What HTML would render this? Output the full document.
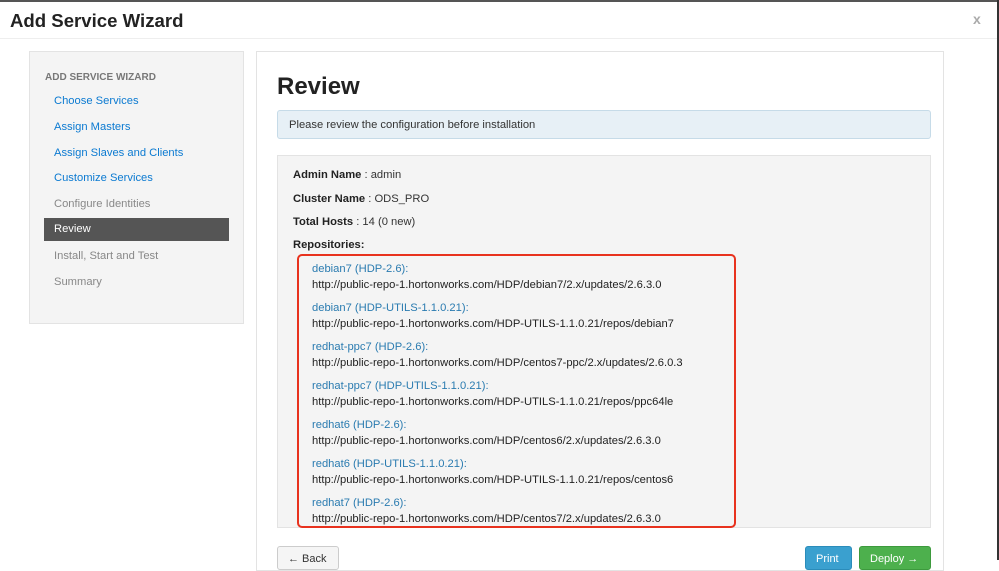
<!DOCTYPE html>
<html><head><style>
*{margin:0;padding:0;box-sizing:border-box}
body{width:999px;height:560px;overflow:hidden;background:#fff;font-family:"Liberation Sans",Arial,sans-serif;font-size:11.2px;color:#333;position:relative}
.top{position:absolute;left:0;top:0;width:999px;height:2px;background:#555}
.rstrip{position:absolute;right:0;top:0;width:2px;height:560px;background:#333}
h1{position:absolute;left:10px;top:10px;font-size:18.6px;font-weight:bold;color:#222}
.x{position:absolute;left:973px;top:11px;font-size:14px;color:#aaa;font-weight:bold}
.hr{position:absolute;left:0;top:38px;width:997px;height:1px;background:#eee}
.nav{position:absolute;left:29px;top:51px;width:215px;height:273px;background:#f4f4f4;border:1px solid #e3e3e3}
.nav .hd{position:absolute;left:15px;top:20px;font-size:10px;font-weight:bold;color:#777}
.nav .it{position:absolute;left:24px;font-size:11.2px;color:#0b7ad1}
.nav .g{color:#888}
.nav .act{position:absolute;left:14px;top:166px;width:185px;height:23px;background:#555;color:#fff;padding:5px 10px}
.main{position:absolute;left:256px;top:51px;width:688px;height:520px;border:1px solid #e3e3e3;background:#fff}
h2{position:absolute;left:277px;top:73px;font-size:24px;font-weight:bold;color:#222}
.alert{position:absolute;left:277px;top:110px;width:654px;height:29px;background:#e7f0f6;border:1px solid #c6dbe8;border-radius:3px;padding:8px 11px;font-size:11.2px}
.well{position:absolute;left:277px;top:155px;width:654px;height:373px;background:#f4f4f4;border:1px solid #e3e3e3}
.l{position:absolute;left:293px;font-size:11.2px}
.l b{color:#222}
.red{position:absolute;left:297px;top:254px;width:439px;height:274px;border:2px solid #e8321e;border-radius:5px}
.rl{position:absolute;left:312px;font-size:11.2px;color:#2a7bb0}
.ru{position:absolute;left:312px;font-size:11.2px;color:#222}
.btn{position:absolute;top:546px;height:24px;border-radius:3px;font-size:11px;padding:6px 10px}
</style></head><body>
<div class="top"></div><div class="rstrip"></div>
<h1>Add Service Wizard</h1><div class="x">x</div><div class="hr"></div>
<div class="nav">
<div class="hd">ADD SERVICE WIZARD</div>
<div class="it" style="top:43px">Choose Services</div>
<div class="it" style="top:69px">Assign Masters</div>
<div class="it" style="top:95px">Assign Slaves and Clients</div>
<div class="it" style="top:120px">Customize Services</div>
<div class="it g" style="top:146px">Configure Identities</div>
<div class="act">Review</div>
<div class="it g" style="top:198px">Install, Start and Test</div>
<div class="it g" style="top:224px">Summary</div>
</div>
<div class="main"></div>
<h2>Review</h2>
<div class="alert">Please review the configuration before installation</div>
<div class="well"></div>
<div class="l" style="top:169px"><b>Admin Name</b> : admin</div>
<div class="l" style="top:193px"><b>Cluster Name</b> : ODS_PRO</div>
<div class="l" style="top:216px"><b>Total Hosts</b> : 14 (0 new)</div>
<div class="l" style="top:239px"><b>Repositories:</b></div>
<div class="red"></div>
<div class="rl" style="top:263px">debian7 (HDP-2.6):</div>
<div class="ru" style="top:279px">http://public-repo-1.hortonworks.com/HDP/debian7/2.x/updates/2.6.3.0</div>
<div class="rl" style="top:302px">debian7 (HDP-UTILS-1.1.0.21):</div>
<div class="ru" style="top:318px">http://public-repo-1.hortonworks.com/HDP-UTILS-1.1.0.21/repos/debian7</div>
<div class="rl" style="top:341px">redhat-ppc7 (HDP-2.6):</div>
<div class="ru" style="top:357px">http://public-repo-1.hortonworks.com/HDP/centos7-ppc/2.x/updates/2.6.0.3</div>
<div class="rl" style="top:380px">redhat-ppc7 (HDP-UTILS-1.1.0.21):</div>
<div class="ru" style="top:396px">http://public-repo-1.hortonworks.com/HDP-UTILS-1.1.0.21/repos/ppc64le</div>
<div class="rl" style="top:419px">redhat6 (HDP-2.6):</div>
<div class="ru" style="top:435px">http://public-repo-1.hortonworks.com/HDP/centos6/2.x/updates/2.6.3.0</div>
<div class="rl" style="top:458px">redhat6 (HDP-UTILS-1.1.0.21):</div>
<div class="ru" style="top:474px">http://public-repo-1.hortonworks.com/HDP-UTILS-1.1.0.21/repos/centos6</div>
<div class="rl" style="top:497px">redhat7 (HDP-2.6):</div>
<div class="ru" style="top:513px">http://public-repo-1.hortonworks.com/HDP/centos7/2.x/updates/2.6.3.0</div>
<div class="btn" style="left:277px;width:62px;background:#f5f5f5;border:1px solid #ccc;color:#333">← Back</div>
<div class="btn" style="left:805px;width:47px;background:#3aa0cf;border:1px solid #2b8cba;color:#fff">Print</div>
<div class="btn" style="left:859px;width:72px;background:#4db04d;border:1px solid #3d9a3d;color:#fff">Deploy →</div>
</body></html>
